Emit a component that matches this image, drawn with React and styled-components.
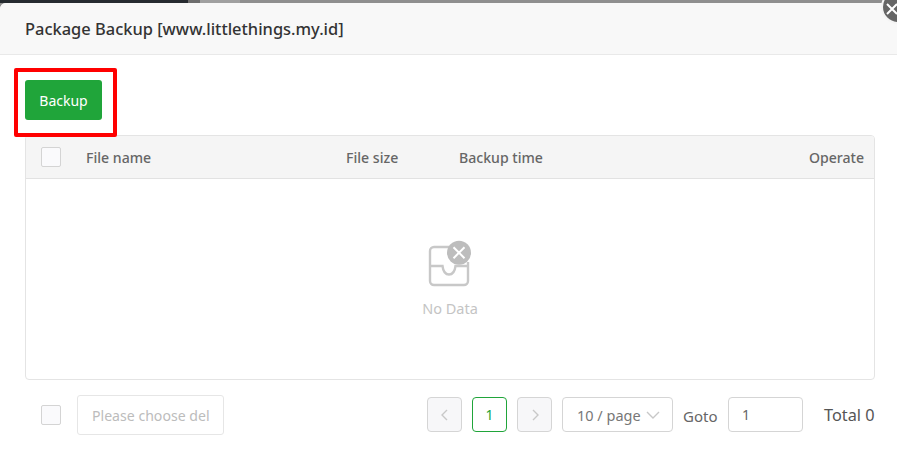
import React from "react";
import styled, { createGlobalStyle } from "styled-components";

const FONT = `"Noto Sans", "Open Sans", sans-serif`;
const Global = createGlobalStyle`
  html, body { margin: 0; padding: 0; background: #fff; }
  body { width: 897px; height: 460px; overflow: hidden; font-family: ${FONT}; }
  * { box-sizing: border-box; }
`;
const Page = styled.div`
  position: relative; width: 897px; height: 460px; overflow: hidden; background: #8f8f8f;
  display: flex; flex-direction: column;
`;
const Backdrop = styled.div`
  height: 3px; flex: none;
  background: linear-gradient(to right, #262b30 0, #262b30 188px, #6e6e6e 188px, #6e6e6e 200px, #a0a0a0 200px, #a0a0a0 240px, #8f8f8f 240px);
`;
const Modal = styled.div`flex: 1; background: #fff; border-top-left-radius: 6px; display: flex; flex-direction: column; overflow: hidden;`;
const Header = styled.div`
  height: 52px; flex: none; display: flex; align-items: center; padding: 0 25px;
  background: #f8f8f8; border-bottom: 1px solid #e9e9e9;
`;
const Title = styled.h1`margin: 0; font-size: 16.450px; font-weight: 500; color: #333; white-space: nowrap;`;
const Body = styled.div`padding: 25px 22px 0 25px; display: flex; flex-direction: column; flex: 1;`;
const BackupButton = styled.button`
  align-self: flex-start; width: 77px; height: 40px; border: 0; border-radius: 3px; padding: 0;
  background: #20a53a; color: #fff; font: 14px ${FONT};
`;
const Highlight = styled.div`
  position: absolute; left: 14px; top: 68px; width: 103px; height: 69px;
  border: 4px solid #ff0000; border-radius: 2px; pointer-events: none;
`;
const Close = styled.div`
  position: absolute; left: 881px; top: -10px; width: 34px; height: 34px; border-radius: 50%;
  background: #666; border: 2px solid #f4f4f4; display: flex; align-items: center; justify-content: center;
  svg { position: relative; left: -6px; top: 2px; }
`;
const Table = styled.div`
  margin-top: 15px; height: 245px; border: 1px solid #e4e4e4; border-radius: 4px; display: flex; flex-direction: column; overflow: hidden;
`;
const HeadRow = styled.div`
  display: grid; grid-template-columns: 45px 260px 113px 1fr auto; align-items: center;
  height: 43px; flex: none; padding: 0 10px 0 15px; background: #f5f5f5; border-bottom: 1px solid #e2e2e2;
  font-size: 14.100px; font-weight: 500; color: #666;
`;
const Check = styled.span`
  display: block; width: 20px; height: 20px; background: #fafafc; border: 1px solid #d4d4d4; border-radius: 2px;
`;
const Empty = styled.div`flex: 1; display: flex; flex-direction: column; align-items: center; padding-top: 61px;`;
const EmptyText = styled.div`margin-top: 11px; font-size: 14.500px; color: #c4c4c4; line-height: 20px;`;
const Footer = styled.div`display: flex; align-items: flex-start; margin-top: 15px; padding-left: 16px;`;
const FooterCheck = styled(Check)`margin-top: 10px; margin-right: 16px;`;
const Select = styled.div`
  width: 147px; height: 40px; border: 1px solid #e6e6e6; border-radius: 3px; padding-left: 14px;
  display: flex; align-items: center; font-size: 14.100px; color: #bcbcbc; white-space: nowrap; overflow: hidden;
`;
const Pager = styled.div`margin-left: auto; margin-top: 2px; display: flex; align-items: center; height: 35px; font-size: 14px; color: #666;`;
const PageBtn = styled.div`
  width: 35px; height: 35px; border-radius: 4px; margin-right: 10px;
  display: flex; align-items: center; justify-content: center;
  background: ${p => p.$active ? "#fff" : "#f7f7f9"};
  border: 1px solid ${p => p.$active ? "#20a53a" : "#d5d5d5"};
  color: #20a53a;
`;
const SizeSelect = styled.div`
  width: 111px; height: 35px; border: 1px solid #d5d5d5; border-radius: 4px; padding: 0 12px 0 14px;
  display: flex; align-items: center; justify-content: space-between; color: #777; font-size: 14.500px; white-space: nowrap;
`;
const Goto = styled.span`margin: 3px 10px 0; width: 35px; white-space: nowrap; color: #666; font-size: 15px;`;
const GotoInput = styled.div`
  width: 75px; height: 35px; border: 1px solid #d5d5d5; border-radius: 4px; padding-left: 13px;
  display: flex; align-items: center; color: #666;
`;
const Total = styled.span`margin: 1px 0 0 21px; width: 51px; font-size: 16.300px; color: #555; white-space: nowrap;`;

const Chevron = ({ d, w = 12, h = 14 }) => (
  <svg width={w} height={h} viewBox={`0 0 ${w} ${h}`} fill="none" stroke="#c8c8c8" strokeWidth="1.4"><path d={d} /></svg>
);

const EmptyIcon = () => (
  <svg width="48" height="47" viewBox="0 0 48 47" fill="none">
    <path d="M24 7H8a4 4 0 0 0-4 4v30a4 4 0 0 0 4 4h30a4 4 0 0 0 4-4V22" stroke="#c8c8c8" strokeWidth="2.400" />
    <path d="M4 26h12.500c.6 5 3 8.500 6.500 8.500s5.900-3.500 6.500-8.500H42" stroke="#c8c8c8" strokeWidth="2.400" />
    <circle cx="33" cy="12.700" r="12" fill="#bdbdbd" />
    <path d="M27.500 7.200l11 11M38.500 7.200l-11 11" stroke="#fff" strokeWidth="2" />
  </svg>
);

export default function App() {
  return (
    <Page>
      <Global />
      <Backdrop />
      <Modal>
        <Header><Title>Package Backup [www.littlethings.my.id]</Title></Header>
        <Body>
          <BackupButton>Backup</BackupButton>
          <Table>
            <HeadRow>
              <Check />
              <span>File name</span>
              <span>File size</span>
              <span>Backup time</span>
              <span>Operate</span>
            </HeadRow>
            <Empty>
              <EmptyIcon />
              <EmptyText>No Data</EmptyText>
            </Empty>
          </Table>
          <Footer>
            <FooterCheck />
            <Select>Please choose del</Select>
            <Pager>
              <PageBtn><Chevron d="M8 2 3 7l5 5" /></PageBtn>
              <PageBtn $active>1</PageBtn>
              <PageBtn><Chevron d="M4 2l5 5-5 5" /></PageBtn>
              <SizeSelect>
                <span>10 / page</span>
                <Chevron w={14} h={10} d="M1 2l6 6 6-6" />
              </SizeSelect>
              <Goto>Goto</Goto>
              <GotoInput>1</GotoInput>
              <Total>Total 0</Total>
            </Pager>
          </Footer>
        </Body>
      </Modal>
      <Highlight />
      <Close>
        <svg width="14" height="14" viewBox="0 0 14 14" stroke="#fff" strokeWidth="2"><path d="M2 2l10 10M12 2 2 12" /></svg>
      </Close>
    </Page>
  );
}
